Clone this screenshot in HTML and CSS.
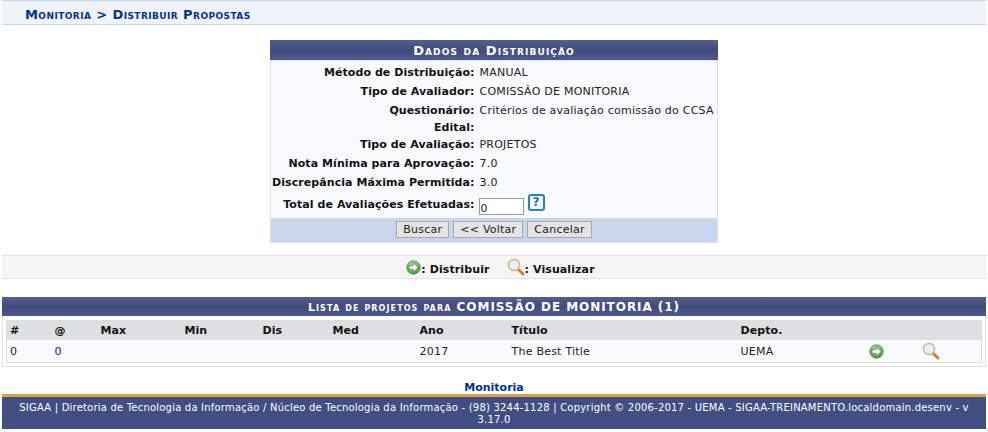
FILE: index.html
```html
<!DOCTYPE html>
<html lang="pt-BR">
<head>
<meta charset="utf-8">
<title>Distribuir Propostas</title>
<link rel="stylesheet" href="styles.css">
</head>
<body>
<h2 class="crumb">Monitoria &gt; Distribuir Propostas</h2>

<table class="form">
  <caption>Dados da Distribuição</caption>
  <tbody>
    <tr class="first"><th>Método de Distribuição:</th><td>MANUAL</td></tr>
    <tr><th>Tipo de Avaliador:</th><td>COMISSÃO DE MONITORIA</td></tr>
    <tr><th>Questionário:</th><td>Critérios de avaliação comissão do CCSA</td></tr>
    <tr class="short"><th>Edital:</th><td></td></tr>
    <tr><th>Tipo de Avaliação:</th><td>PROJETOS</td></tr>
    <tr><th>Nota Mínima para Aprovação:</th><td>7.0</td></tr>
    <tr><th>Discrepância Máxima Permitida:</th><td>3.0</td></tr>
    <tr class="input-row">
      <th>Total de Avaliações Efetuadas:</th>
      <td><span class="input-wrap"><input class="num" type="text" value="0"><span class="help">?</span></span></td>
    </tr>
  </tbody>
  <tfoot>
    <tr><td colspan="2"><button>Buscar</button><button>&lt;&lt; Voltar</button><button>Cancelar</button></td></tr>
  </tfoot>
</table>

<div class="legend">
  <svg class="ico-go" viewBox="0 0 16 16"><use href="#go"/></svg><b>: Distribuir</b>
  <svg class="ico-lens legend-lens" viewBox="0 0 18 18"><use href="#lens"/></svg><b>: Visualizar</b>
</div>

<div class="list-cap"><span class="sc">Lista de projetos para</span> COMISSÃO DE MONITORIA (1)</div>
<div class="list-box">
  <table class="list">
    <colgroup>
      <col class="c1"><col class="c2"><col class="c3"><col class="c4"><col class="c5"><col class="c6"><col class="c7"><col class="c8"><col class="c9"><col class="c10"><col>
    </colgroup>
    <thead>
      <tr><th>#</th><th>@</th><th>Max</th><th>Min</th><th>Dis</th><th>Med</th><th>Ano</th><th>Título</th><th>Depto.</th><th></th><th></th></tr>
    </thead>
    <tbody>
      <tr>
        <td>0</td><td class="link">0</td><td></td><td></td><td></td><td></td><td>2017</td><td>The Best Title</td><td>UEMA</td>
        <td><svg class="ico-go" viewBox="0 0 16 16"><use href="#go"/></svg></td>
        <td><svg class="ico-lens" viewBox="0 0 18 18"><use href="#lens"/></svg></td>
      </tr>
    </tbody>
  </table>
</div>

<div class="module">Monitoria</div>
<footer class="foot">SIGAA | Diretoria de Tecnologia da Informação / Núcleo de Tecnologia da Informação - (98) 3244-1128 | Copyright © 2006-2017 - UEMA - SIGAA-TREINAMENTO.localdomain.desenv - v 3.17.0</footer>

<svg class="defs" width="0" height="0" aria-hidden="true">
  <defs>
    <radialGradient id="gg" cx="45%" cy="35%" r="70%">
      <stop offset="0" stop-color="#c4e8ae"/><stop offset="0.6" stop-color="#6dbb58"/><stop offset="1" stop-color="#35863a"/>
    </radialGradient>
    <symbol id="go" viewBox="0 0 16 16">
      <circle cx="8" cy="8" r="7.2" fill="url(#gg)" stroke="#4a9445" stroke-width="0.8"/>
      <path d="M3.2 6H7.6V3L13.2 8 7.6 13V10H3.2Z" fill="#f7f7f7" stroke="#555" stroke-width="0.7" stroke-linejoin="round"/>
    </symbol>
    <symbol id="lens" viewBox="0 0 18 18">
      <path d="M10.8 11 L16 16" stroke="#c8823c" stroke-width="3" stroke-linecap="round"/>
      <circle cx="7" cy="7" r="5.6" fill="#e6f0f8" stroke="#e0b27a" stroke-width="1.5"/>
    </symbol>
  </defs>
</svg>
</body>
</html>
```
FILE: styles.css
```css
* { box-sizing: border-box; }
html, body { margin: 0; padding: 0; background: #fff; }
body {
  font-family: "DejaVu Sans", Verdana, sans-serif;
  font-size: 11px;
  letter-spacing: 0.23px;
  color: #222;
  padding: 0 2px;
  height: 432px;
  overflow: hidden;
}
.crumb {
  margin: 0 0 15px;
  height: 25px;
  padding: 0 0 0 23px;
  background: #eff3fa;
  border-top: 1px solid #c8d5ec;
  border-bottom: 1px solid #c8d5ec;
  color: #003390;
  font-size: 13px;
  letter-spacing: 0.42px;
  font-weight: bold;
  font-variant: small-caps;
  line-height: 27px;
}
table { border-collapse: collapse; }
.form {
  width: 448px;
  margin: 0 auto;
  background: #f9fafd;
  border: 1px solid #dfe3ea;
  border-top: 0;
  table-layout: fixed;
}
.form caption, .list-cap {
  background: linear-gradient(#565f8c, #414c7e 50%, #4f5a8c);
  color: #fff;
  font-weight: bold;
  text-align: center;
  font-variant: small-caps;
}
.form caption {
  height: 21px;
  line-height: 21px;
  font-size: 13px;
  letter-spacing: 1.1px;
  border-bottom: 1px solid #dfe3ea;
}
.form th {
  width: 206px;
  padding: 2px 2px 0 0;
  text-align: right;
  font-weight: bold;
  letter-spacing: 0.07px;
  color: #111;
  white-space: nowrap;
}
.form td { padding: 2px 0 0 3px; white-space: nowrap; }
.form tbody tr { height: 19px; }
.form tbody tr.first { height: 20px; }
.form tbody tr.short { height: 15px; }
.form tbody tr.input-row { height: 27px; }
.form tbody tr.input-row td, .form tbody tr.input-row th { padding-top: 0; }
.input-wrap { display: flex; align-items: flex-start; gap: 4px; }
.num {
  width: 45px;
  height: 17px;
  margin: 4px 0 0 -1px;
  padding: 3px 1px 0;
  border: 1px solid #999;
  background: #fff;
  font: 11px "DejaVu Sans", sans-serif;
  color: #222;
}
.help {
  width: 17px;
  height: 17px;
  border: 2px solid #2a7fc0;
  border-radius: 3px;
  background: #f4f8fc;
  color: #1c6fb5;
  font: bold 12px/13px "DejaVu Sans", sans-serif;
  text-align: center;
}
.form tfoot td {
  background: #c8d5ec;
  height: 24px;
  padding: 0;
  text-align: center;
}
button {
  height: 17px;
  margin: 0 2px;
  padding: 0 6px;
  border: 1px solid #a8a8a8;
  background: #e4e4e4;
  color: #222;
  font: 11px "DejaVu Sans", sans-serif;
  letter-spacing: 0.23px;
  vertical-align: middle;
}
.legend {
  margin-top: 12px;
  height: 24px;
  padding-left: 13px;
  background: #f5f5f5;
  border-top: 1px solid #e2e2e2;
  border-bottom: 1px solid #e2e2e2;
  display: flex;
  justify-content: center;
  align-items: center;
  color: #111;
  letter-spacing: 0.1px;
}
.legend b { padding-top: 5px; }
.legend .ico-go { margin-top: 2px; }
.legend-lens { margin-left: 17px; }
.ico-go { width: 15px; height: 15px; display: block; }
.ico-lens { width: 18px; height: 18px; display: block; }
.list-cap {
  margin-top: 18px;
  height: 19px;
  line-height: 20px;
  font-size: 12px;
  letter-spacing: 0.95px;
}
.list-cap .sc { font-size: 11px; letter-spacing: 1.1px; }
.list-box {
  height: 51px;
  padding: 4px 3px 3px;
  border: 1px solid #dfdfdf;
  border-top: 0;
}
.list {
  width: 100%;
  table-layout: fixed;
  border: 1px solid #dfdfdf;
  background: #f9fafd;
}
.c1 { width: 45px; }
.c2 { width: 46px; }
.c3 { width: 84px; }
.c4 { width: 78px; }
.c5 { width: 70px; }
.c6 { width: 87px; }
.c7 { width: 92px; }
.c8 { width: 229px; }
.c9 { width: 128px; }
.c10 { width: 53px; }
.list th {
  height: 20px;
  background: #dedfe3;
  padding: 1px 3px 0;
  text-align: left;
  font-weight: bold;
  letter-spacing: 0.07px;
  color: #111;
}
.list td { height: 22px; padding: 1px 3px 0; }
.link { color: #3300cc; }
.module {
  margin-top: 15px;
  height: 12px;
  line-height: 12px;
  text-align: center;
  font-weight: bold;
  letter-spacing: 0;
  color: #003390;
}
.foot {
  height: 35px;
  border-top: 3px solid #dc9f4c;
  background: #404e82;
  color: #fff;
  text-align: center;
  padding: 5px 12px 0;
  font-size: 10px;
  letter-spacing: 0.205px;
  line-height: 12px;
}
.defs { position: absolute; }
```
